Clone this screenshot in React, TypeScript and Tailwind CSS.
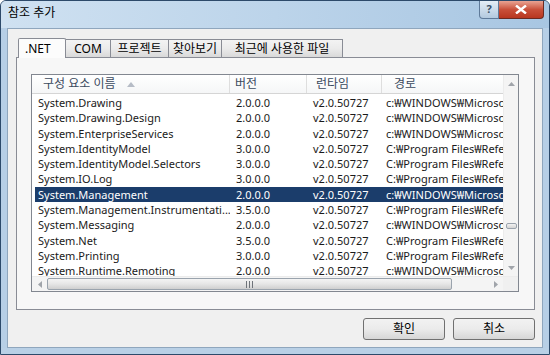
import React from 'react'

const ui = '"Segoe UI", "Noto Sans", "Noto Sans CJK KR", sans-serif'

const rows: [string, string, string, string][] = [
  ['System.Drawing', '2.0.0.0', 'v2.0.50727', 'c:₩WINDOWS₩Microsoft.NET'],
  ['System.Drawing.Design', '2.0.0.0', 'v2.0.50727', 'c:₩WINDOWS₩Microsoft.NET'],
  ['System.EnterpriseServices', '2.0.0.0', 'v2.0.50727', 'c:₩WINDOWS₩Microsoft.NET'],
  ['System.IdentityModel', '3.0.0.0', 'v2.0.50727', 'C:₩Program Files₩Reference'],
  ['System.IdentityModel.Selectors', '3.0.0.0', 'v2.0.50727', 'C:₩Program Files₩Reference'],
  ['System.IO.Log', '3.0.0.0', 'v2.0.50727', 'C:₩Program Files₩Reference'],
  ['System.Management', '2.0.0.0', 'v2.0.50727', 'c:₩WINDOWS₩Microsoft.NET'],
  ['System.Management.Instrumentati...', '3.5.0.0', 'v2.0.50727', 'C:₩Program Files₩Reference'],
  ['System.Messaging', '2.0.0.0', 'v2.0.50727', 'c:₩WINDOWS₩Microsoft.NET'],
  ['System.Net', '3.5.0.0', 'v2.0.50727', 'C:₩Program Files₩Reference'],
  ['System.Printing', '3.0.0.0', 'v2.0.50727', 'C:₩Program Files₩Reference'],
  ['System.Runtime.Remoting', '2.0.0.0', 'v2.0.50727', 'c:₩WINDOWS₩Microsoft.NET'],
]

const tabs = [
  { label: 'COM', w: 'w-[45px]' },
  { label: '프로젝트', w: 'w-[58px]' },
  { label: '찾아보기', w: 'w-[53px]' },
  { label: '최근에 사용한 파일', w: 'w-[121px]' },
]

function Arrow({ dir }: { dir: 'up' | 'down' | 'left' | 'right' }) {
  const pts = {
    up: '0,4 3.5,0 7,4',
    down: '0,0 3.5,4 7,0',
    left: '4,0 0,3.5 4,7',
    right: '0,0 4,3.5 0,7',
  }[dir]
  const vertical = dir === 'up' || dir === 'down'
  return (
    <svg width={vertical ? 7 : 4} height={vertical ? 4 : 7} viewBox={vertical ? '0 0 7 4' : '0 0 4 7'}>
      <polygon points={pts} fill="#a0a4aa" />
    </svg>
  )
}

export default function App() {
  return (
    <div
      className="w-[550px] h-[355px] flex flex-col bg-[#b7cfe6] border border-[#2d4a6a] rounded-t-[6px] overflow-hidden"
      style={{ fontFamily: ui }}
    >
      {/* Title bar */}
      <div className="h-[27px] flex items-start bg-gradient-to-r from-[#cfe1f1] via-[#bcd4ea] to-[#a8c6e2] relative">
        <div className="pl-[7px] pt-[6px] text-[12px] text-black leading-none">참조 추가</div>
        <div className="ml-auto mr-[5px] flex">
          <div className="w-[20px] h-[18px] border border-[#5f7a99] border-t-0 rounded-bl-[4px] bg-gradient-to-b from-[#e5eef7] to-[#b3c9de] flex items-center justify-center text-[11px] text-[#3a4f66] font-bold">
            ?
          </div>
          <div className="w-[45px] h-[18px] border border-[#6b2a22] border-t-0 border-l-0 rounded-br-[4px] bg-gradient-to-b from-[#e8a393] via-[#c9503a] to-[#b8361f] flex items-center justify-center">
            <svg width="12" height="9" viewBox="0 0 12 9">
              <path d="M1 0.5 L11 8.5 M11 0.5 L1 8.5" stroke="#fff" strokeWidth="2.4" />
            </svg>
          </div>
        </div>
      </div>

      {/* Client area */}
      <div className="mx-[6px] h-[320px] bg-[#f0f0f0] border border-[#8fa6bd] flex flex-col">
        {/* Tabs */}
        <div className="flex items-end pl-[10px] pt-[8px] h-[28px]">
          <div className="w-[48px] h-[20px] bg-[#fcfcfc] border border-[#898c95] border-b-0 rounded-t-[2px] pl-[6px] pt-[1px] text-[12px] text-black relative -mb-px z-10">
            .NET
          </div>
          {tabs.map((t) => (
            <div
              key={t.label}
              className={`${t.w} h-[18px] bg-gradient-to-b from-[#f3f3f3] via-[#ebebeb] to-[#d9d9d9] border border-[#898c95] border-l-0 border-b-0 text-[12px] text-black text-center leading-[17px] whitespace-nowrap`}
            >
              {t.label}
            </div>
          ))}
        </div>

        {/* Tab panel */}
        <div className="ml-[8px] w-[519px] h-[253px] bg-[#f7f7f7] border border-[#898c95] pl-[14px] pt-[16px]">
          {/* List view */}
          <div className="w-[488px] h-[218px] bg-white border border-[#828790] flex flex-col">
            <div className="flex flex-1 min-h-0">
              <div className="w-[471px] flex flex-col min-h-0">
                {/* Header */}
                <div className="h-[19px] flex text-[12px] text-[#3b4a5e] bg-gradient-to-b from-white to-[#f5f6f7] border-b border-[#d5d5d5] leading-[18px] shrink-0">
                  <div className="w-[198px] pl-[11px] flex items-center gap-[12px] border-r border-[#dedede]">
                    <span>구성 요소 이름</span>
                    <svg width="8" height="5" viewBox="0 0 8 5">
                      <polygon points="0,5 4,0 8,5" fill="#b6bcc6" />
                    </svg>
                  </div>
                  <div className="w-[77px] pl-[5px] border-r border-[#dedede]">버전</div>
                  <div className="w-[75px] pl-[9px] border-r border-[#dedede]">런타임</div>
                  <div className="flex-1 pl-[12px]">경로</div>
                </div>
                {/* Rows */}
                <div className="flex-1 overflow-hidden pt-[1px]">
                  {rows.map((r, i) => {
                    const sel = i === 6
                    return (
                      <div
                        key={r[0]}
                        className={`h-[15.3px] flex text-[11px] leading-[15px] whitespace-nowrap ${
                          sel ? 'bg-[#1b3d6b] text-white ml-[3px]' : 'text-[#1a1a1a]'
                        }`}
                      >
                        <div className={`${sel ? 'w-[195px] pl-[3px]' : 'w-[198px] pl-[6px]'} overflow-hidden`}>{r[0]}</div>
                        <div className="w-[77px] pl-[6px]">{r[1]}</div>
                        <div className="w-[75px] pl-[6px]">{r[2]}</div>
                        <div className="flex-1 pl-[4px] overflow-hidden">{r[3]}</div>
                      </div>
                    )
                  })}
                </div>
              </div>
              {/* Vertical scrollbar */}
              <div className="w-[15px] bg-[#f4f4f4] border-l border-[#ececec] flex flex-col items-center">
                <div className="h-[17px] flex items-center justify-center">
                  <Arrow dir="up" />
                </div>
                <div className="flex-1 relative w-full">
                  <div className="absolute left-[2px] right-[1px] top-[131px] h-[6px] rounded-[2px] border border-[#9aa3ad] bg-gradient-to-b from-[#f2f2f2] to-[#d4d4d4]" />
                </div>
                <div className="h-[17px] flex items-center justify-center">
                  <Arrow dir="down" />
                </div>
              </div>
            </div>
            {/* Horizontal scrollbar */}
            <div className="h-[15px] flex bg-[#f4f4f4] border-t border-[#ececec] shrink-0">
              <div className="w-[15px] flex items-center justify-center">
                <Arrow dir="left" />
              </div>
              <div className="w-[405px] my-[1px] rounded-[2px] border border-[#9aa3ad] bg-gradient-to-b from-[#f4f4f4] via-[#e6e6e6] to-[#cfcfcf] flex items-center justify-center">
                <svg width="7" height="7" viewBox="0 0 7 7">
                  <path d="M0.5 0 V7 M3.5 0 V7 M6.5 0 V7" stroke="#6f747a" strokeWidth="1" />
                </svg>
              </div>
              <div className="flex-1 flex items-center justify-end pr-[5px]">
                <Arrow dir="right" />
              </div>
              <div className="w-[15px] bg-[#f0f0f0]" />
            </div>
          </div>
        </div>

        {/* Buttons */}
        <div className="flex justify-end gap-[8px] pr-[7px] pt-[8px]">
          {['확인', '취소'].map((b) => (
            <div
              key={b}
              className="w-[82px] h-[22px] rounded-[3px] border border-[#707070] bg-gradient-to-b from-[#f2f2f2] via-[#ebebeb] to-[#d6d6d6] text-[12px] text-black flex items-center justify-center"
            >
              {b}
            </div>
          ))}
        </div>
      </div>
      <div className="flex-1 bg-[#b9d0e6]" />
    </div>
  )
}
